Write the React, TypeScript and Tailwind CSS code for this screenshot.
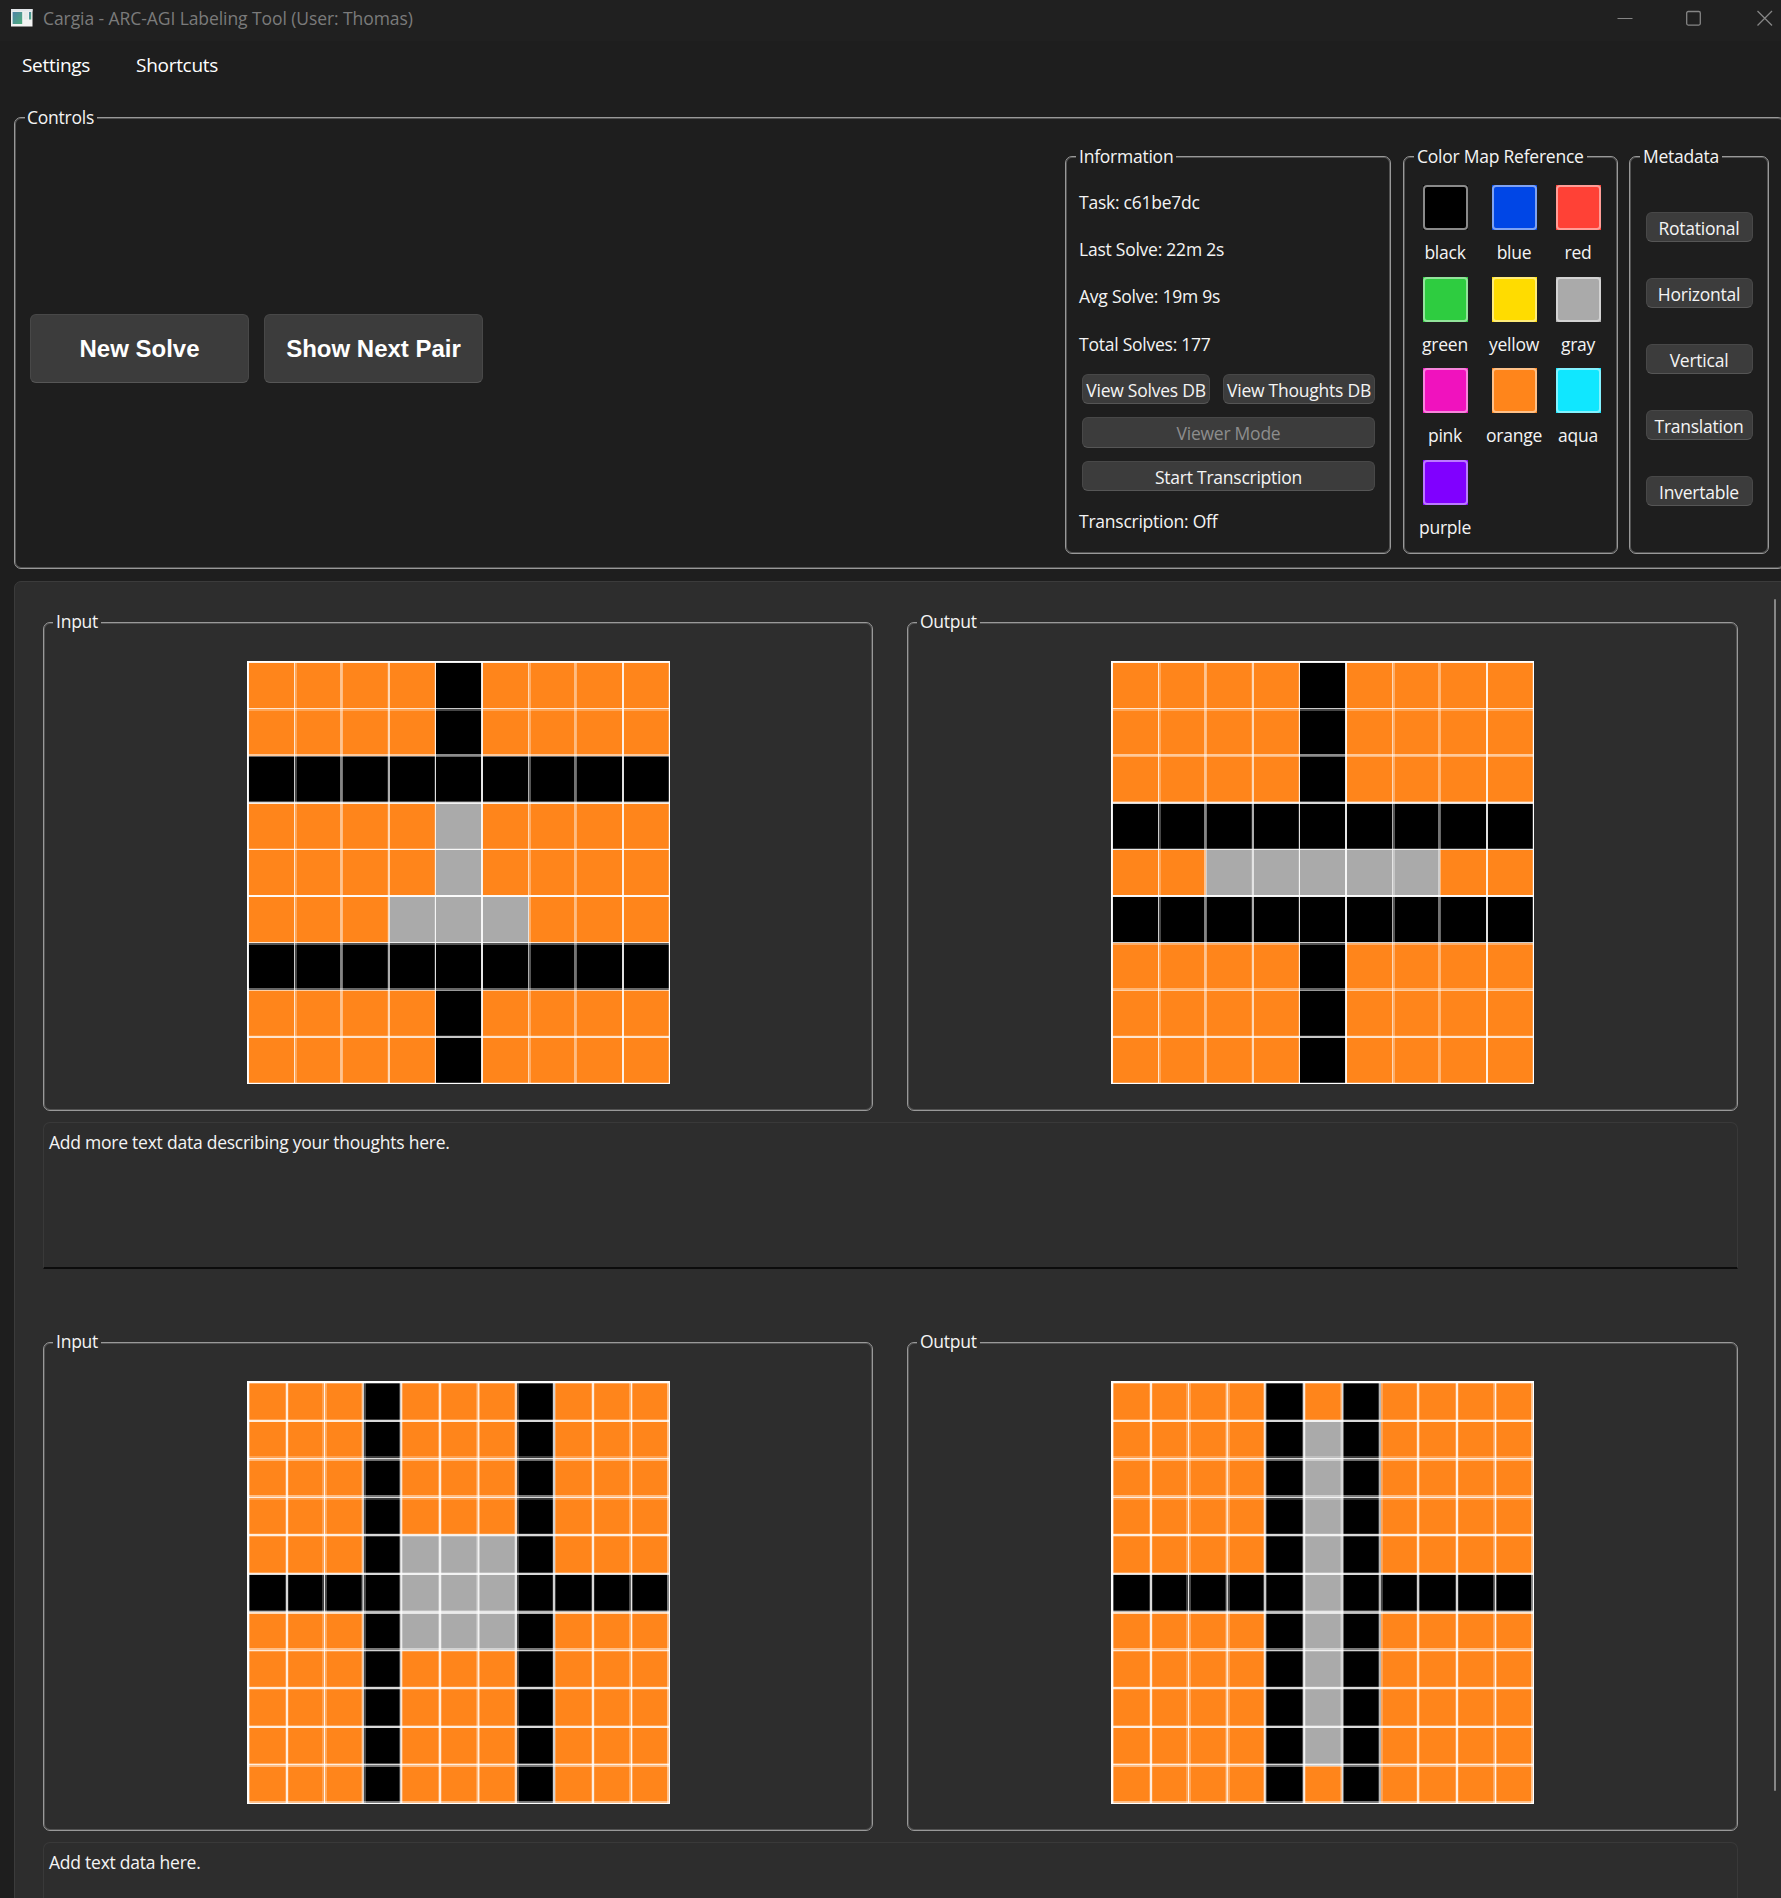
import type { ReactNode } from "react";

type Line = [number, number];

const ORANGE = "#ff851b";
const BLACK = "#000000";
const GRAY = "#aaaaaa";
const GRID_SIZE = 423;

const FILL: Record<string, string> = { o: ORANGE, k: BLACK, g: GRAY };

/* Grid rules as [pixel offset, opacity] pairs. */
const RULES_9_X: Line[] = [
  [0, 1], [1, 0.92], [47, 0.8], [48, 0.27], [49, 0.27], [93, 0.5], [94, 0.52], [95, 0.45],
  [140, 0.15], [141, 0.68], [142, 0.68], [187, 0.15], [188, 0.88], [234, 0.9], [235, 0.9],
  [281, 0.68], [282, 0.33], [283, 0.33], [327, 0.45], [328, 0.45], [329, 0.4], [375, 0.88], [376, 0.88],
  [421, 0.2], [422, 1],
];
const RULES_9_Y: Line[] = [
  [0, 1], [1, 0.92], [47, 0.78], [48, 0.27], [49, 0.27], [93, 0.55], [94, 0.55], [95, 0.42],
  [140, 0.3], [141, 0.85], [142, 0.85], [187, 0.22], [188, 0.9], [234, 0.95], [235, 0.95],
  [281, 0.8], [282, 0.33], [283, 0.33], [327, 0.4], [328, 0.4], [329, 0.6], [374, 0.15], [375, 0.78], [376, 0.78],
  [421, 0.2], [422, 1],
];
const RULES_11_X: Line[] = [
  [0, 1], [1, 1], [2, 0.35], [38, 0.22], [39, 0.85], [40, 0.85], [41, 0.15], [75, 0.25], [76, 0.25], [77, 0.9], [78, 0.28], [79, 0.28],
  [114, 0.2], [115, 0.55], [116, 0.8], [117, 0.28], [118, 0.28], [152, 0.25], [153, 0.8], [154, 0.8], [155, 0.25],
  [191, 0.28], [192, 0.85], [193, 0.85], [194, 0.22], [229, 0.25], [230, 0.5], [231, 0.85], [232, 0.4],
  [267, 0.22], [268, 0.72], [269, 0.72], [270, 0.28], [271, 0.25], [305, 0.15], [306, 0.82], [307, 0.82], [308, 0.25],
  [344, 0.22], [345, 0.85], [346, 0.85], [347, 0.15], [382, 0.3], [383, 0.4], [384, 0.9], [385, 0.28], [420, 0.5], [421, 0.55], [422, 1],
];
const RULES_11_Y: Line[] = [
  [0, 1], [1, 1], [2, 0.3], [38, 0.25], [39, 0.85], [40, 0.85], [75, 0.25], [76, 0.25], [77, 0.85], [78, 0.47], [79, 0.42],
  [114, 0.47], [115, 0.47], [116, 0.85], [117, 0.22], [118, 0.2], [152, 0.15], [153, 0.85], [154, 0.85], [155, 0.25],
  [191, 0.25], [192, 0.85], [193, 0.85], [229, 0.25], [230, 0.72], [231, 0.77], [232, 0.7],
  [267, 0.47], [268, 0.47], [269, 0.82], [270, 0.22], [305, 0.15], [306, 0.85], [307, 0.85], [308, 0.22],
  [344, 0.27], [345, 0.85], [346, 0.85], [382, 0.3], [383, 0.85], [384, 0.47], [385, 0.45], [420, 0.45], [421, 0.5], [422, 1],
];

const INPUT_1 = ["ooookoooo", "ooookoooo", "kkkkkkkkk", "oooogoooo", "oooogoooo", "ooogggooo", "kkkkkkkkk", "ooookoooo", "ooookoooo"];
const OUTPUT_1 = ["ooookoooo", "ooookoooo", "ooookoooo", "kkkkkkkkk", "oogggggoo", "kkkkkkkkk", "ooookoooo", "ooookoooo", "ooookoooo"];
const IN2 = "oookoookooo";
const IN2_GRAY = "oookgggkooo";
const INPUT_2 = [IN2, IN2, IN2, IN2, IN2_GRAY, "kkkkgggkkkk", IN2_GRAY, IN2, IN2, IN2, IN2];
const OUT2_EDGE = "ooookokoooo";
const OUT2 = "ooookgkoooo";
const OUTPUT_2 = [OUT2_EDGE, OUT2, OUT2, OUT2, OUT2, "kkkkkgkkkkk", OUT2, OUT2, OUT2, OUT2, OUT2_EDGE];

function ArcGrid({ rows }: { rows: string[] }) {
  const n = rows.length;
  const edge = (i: number) => Math.round((i * (GRID_SIZE - 1)) / n) + (i === 0 ? 0 : 1);
  const xs = n === 9 ? RULES_9_X : RULES_11_X;
  const ys = n === 9 ? RULES_9_Y : RULES_11_Y;
  return (
    <svg width={GRID_SIZE} height={GRID_SIZE} shapeRendering="crispEdges" className="block">
      {rows.map((row, r) =>
        row.split("").map((c, k) => (
          <rect
            key={`${r}-${k}`}
            x={edge(k)}
            y={edge(r)}
            width={edge(k + 1) - edge(k)}
            height={edge(r + 1) - edge(r)}
            fill={FILL[c]}
          />
        )),
      )}
      {xs.map(([p, a]) => (
        <rect key={`x${p}`} x={p} y={0} width={1} height={GRID_SIZE} fill="#fff" fillOpacity={a} />
      ))}
      {ys.map(([p, a]) => (
        <rect key={`y${p}`} x={0} y={p} width={GRID_SIZE} height={1} fill="#fff" fillOpacity={a} />
      ))}
    </svg>
  );
}

function Group({ title, legend, className, children }: { title: string; legend: string; className: string; children?: ReactNode }) {
  return (
    <section className={`relative rounded-[7px] border border-[#999999] shadow-[inset_0_0_0_1px_#525252] ${className}`}>
      <h2 className={`absolute h-[26px] whitespace-nowrap leading-[26px] ${legend}`}>{title}</h2>
      {children}
    </section>
  );
}

function Button({ label, className }: { label: string; className: string }) {
  return (
    <button
      className={`flex shrink-0 items-center justify-center whitespace-nowrap rounded-[6px] border border-[#484848] border-b-[#565656] bg-[#3c3c3c] ${className}`}
    >
      {label}
    </button>
  );
}

const SWATCHES = [
  ["black", "bg-black border-[#8a8a8a]", "bg-black"],
  ["blue", "bg-[#0046e6] border-[#7ea2f2]", "bg-[#0046e6]"],
  ["red", "bg-[#ff4136] border-[#ff9d97]", "bg-[#ff4136]"],
  ["green", "bg-[#2ecc40] border-[#92e49b]", "bg-[#2ecc40]"],
  ["yellow", "bg-[#ffdc00] border-[#ffec78]", "bg-[#ffdc00]"],
  ["gray", "bg-[#aaaaaa] border-[#d3d3d3]", "bg-[#aaaaaa]"],
  ["pink", "bg-[#f012be] border-[#f784dc]", "bg-[#f012be]"],
  ["orange", "bg-[#ff851b] border-[#ffc188]", "bg-[#ff851b]"],
  ["aqua", "bg-[#10e7ff] border-[#84f2ff]", "bg-[#10e7ff]"],
  ["purple", "bg-[#8000ff] border-[#bb78ff]", "bg-[#8000ff]"],
];

const DARK_LEGEND = "-top-[14px] left-[10px] bg-[#1e1e1e] px-[3px]";
const PANEL_LEGEND = "-top-[15px] left-[9px] bg-[#2d2d2d] px-[3px]";

function Pair({ input, output, note }: { input: string[]; output: string[]; note: string }) {
  return (
    <div className="flex h-[720px] shrink-0 flex-col">
      <div className="flex gap-[34px]">
        <Group title="Input" legend={PANEL_LEGEND} className="h-[489px] w-[830px] pl-[203px] pt-[38px]">
          <ArcGrid rows={input} />
        </Group>
        <Group title="Output" legend={PANEL_LEGEND} className="h-[489px] w-[831px] pl-[203px] pt-[38px]">
          <ArcGrid rows={output} />
        </Group>
      </div>
      <div className="mt-[11px] h-[147px] w-[1695px] rounded-t-[7px] border border-b-2 border-[#393939] border-b-[#0c0c0c] pl-[5px] pt-[6px] leading-[26px]">
        {note}
      </div>
    </div>
  );
}

export default function App() {
  return (
    <div className="flex h-[1898px] w-[1781px] flex-col overflow-hidden bg-[#1e1e1e] font-['Open_Sans',sans-serif] text-[17.5px] tracking-[-0.24px] text-[#f4f4f4]">
      <header className="flex h-[41px] shrink-0 items-center bg-[#202020] tracking-[-0.08px] text-[#7b7b7b]">
        <svg width="22" height="18" viewBox="0 0 22 18" className="-mt-[6px] ml-[11px]">
          <defs>
            <linearGradient id="pane" x1="0" y1="0" x2="1" y2="1">
              <stop offset="0" stopColor="#4f83a8" />
              <stop offset="1" stopColor="#4fae7c" />
            </linearGradient>
          </defs>
          <rect width="21.5" height="17.5" fill="#f3f3f3" />
          <rect width="21.5" height="2.5" fill="#e2e6ea" />
          <rect x="1.6" y="3" width="9.6" height="12" fill="url(#pane)" />
          <rect x="12.6" y="3" width="4.6" height="7.5" fill="#e6eaea" />
          <rect x="18" y="3" width="2.2" height="7.5" fill="url(#pane)" />
        </svg>
        <span className="-mt-[4px] ml-[10px] whitespace-nowrap">Cargia - ARC-AGI Labeling Tool (User: Thomas)</span>
        <svg width="156" height="16" viewBox="0 0 156 16" fill="none" stroke="#858585" className="-mt-[5px] ml-auto mr-[8px]">
          <path d="M0.5 8.5H15.5" />
          <rect x="69.7" y="1.5" width="13.6" height="13.6" rx="1.5" strokeWidth="1.3" />
          <path d="M140.5 1L155 15.5M155 1L140.5 15.5" strokeWidth="1.3" />
        </svg>
      </header>

      <nav className="flex h-[76px] shrink-0 gap-[46px] pl-[22px] pt-[10px] text-[19px] leading-[28px] tracking-[-0.3px] text-white">
        <span>Settings</span>
        <span>Shortcuts</span>
      </nav>

      <Group title="Controls" legend="-top-[14px] left-[10px] bg-[#1e1e1e] pl-[2px] pr-[3px]" className="ml-[14px] flex h-[452px] w-[1771px] shrink-0 pl-[15px] pt-[38px]">
        <div className="mt-[158px] flex gap-[15px] font-['Liberation_Sans',Arial,sans-serif] text-[24px] font-bold tracking-normal text-white">
          <Button label="New Solve" className="h-[69px] w-[219px]" />
          <Button label="Show Next Pair" className="h-[69px] w-[219px]" />
        </div>

        <div className="ml-auto mr-[15px] flex">
          <Group title="Information" legend={DARK_LEGEND} className="flex h-[398px] w-[326px] flex-col pl-[13px] pt-[22px]">
            <p className="h-[47px] leading-[47px]">Task: c61be7dc</p>
            <p className="h-[47px] leading-[47px]">Last Solve: 22m 2s</p>
            <p className="h-[47px] leading-[47px]">Avg Solve: 19m 9s</p>
            <p className="h-[48px] leading-[48px]">Total Solves: 177</p>
            <div className="ml-[3px] mt-[6px] flex flex-col gap-[13px]">
              <div className="flex gap-[13px]">
                <Button label="View Solves DB" className="h-[30px] w-[128px] pt-[2px]" />
                <Button label="View Thoughts DB" className="h-[30px] w-[152px] pt-[2px]" />
              </div>
              <Button label="Viewer Mode" className="h-[31px] w-[293px] pt-[1px] text-[#8d8d8d]" />
              <Button label="Start Transcription" className="h-[30px] w-[293px] pt-[2px]" />
            </div>
            <p className="mt-[7px] h-[47px] leading-[47px]">Transcription: Off</p>
          </Group>

          <Group title="Color Map Reference" legend={DARK_LEGEND} className="ml-[12px] h-[398px] w-[215px] pl-[5px] pt-[28px]">
            <div className="grid grid-cols-[72px_66px_62px] text-center">
              {SWATCHES.map(([name, ring, fill]) => (
                <div key={name} className="flex h-[91.6px] flex-col items-center">
                  <div className={`h-[45px] w-[45px] ${fill}`}>
                    <div className={`h-full w-full rounded-[4px] border-2 ${ring}`} />
                  </div>
                  <span className="mt-[9px] leading-[26px]">{name}</span>
                </div>
              ))}
            </div>
          </Group>

          <Group title="Metadata" legend={DARK_LEGEND} className="ml-[11px] flex h-[398px] w-[140px] flex-col items-center gap-[36px] pt-[55px]">
            {["Rotational", "Horizontal", "Vertical", "Translation", "Invertable"].map((label) => (
              <Button key={label} label={label} className="h-[30px] w-[107px] pt-[2px]" />
            ))}
          </Group>
        </div>
      </Group>

      <main className="ml-[14px] mt-[12px] flex h-[1330px] w-[1790px] shrink-0 rounded-[7px] border border-[#3b3b3b] bg-[#2d2d2d]">
        <div className="ml-[28px] mt-[40px] flex w-[1695px] shrink-0 flex-col">
          <Pair input={INPUT_1} output={OUTPUT_1} note="Add more text data describing your thoughts here." />
          <Pair input={INPUT_2} output={OUTPUT_2} note="Add text data here." />
        </div>
        <div className="ml-[36px] mt-[17px] h-[1192px] w-[2px] rounded-full bg-[#868686]" />
      </main>
    </div>
  );
}
